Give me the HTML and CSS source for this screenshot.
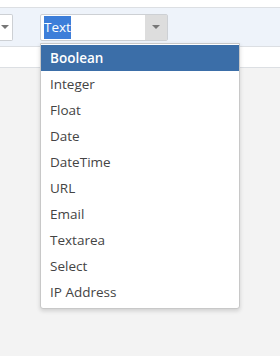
FILE: index.html
```html
<!DOCTYPE html>
<html lang="en">
<head>
  <meta charset="UTF-8" />
  <title>Field type</title>
  <link rel="stylesheet" href="styles.css">
</head>
<body>
  <div class="top"></div>
  <div class="toolbar">
    <div class="select select-left"><span class="arrow"></span></div>
    <div class="select select-type">
      <span class="value"><span class="sel">Text</span></span>
      <span class="btn"><span class="arrow"></span></span>
    </div>
  </div>
  <div class="row"></div>
  <div class="rest"></div>

  <ul class="dropdown">
    <li class="active">Boolean</li>
    <li>Integer</li>
    <li>Float</li>
    <li>Date</li>
    <li>DateTime</li>
    <li>URL</li>
    <li>Email</li>
    <li>Textarea</li>
    <li>Select</li>
    <li>IP Address</li>
  </ul>
</body>
</html>
```

FILE: styles.css
```css
body {
  margin: 0;
  font-family: "Open Sans", "Noto Sans", sans-serif;
  font-size: 13.5px;
  color: #444;
  background: #f3f3f3;
  height: 356px;
  overflow: hidden;
}
.top {
  height: 7px;
  background: #fff;
  border-bottom: 1px solid #dcdfe3;
}
.toolbar {
  height: 38px;
  background: #eef3fa;
  border-bottom: 1px solid #dcdfe3;
  display: flex;
  align-items: center;
  gap: 27px;
}
.select {
  height: 25px;
  background: #fff;
  border: 1px solid #cdd0d4;
  border-radius: 2px;
  display: flex;
  align-items: center;
}
.select-left {
  width: 12px;
  border-left: none;
  border-radius: 0 2px 2px 0;
}
.select-left .arrow {
  margin-left: 1px;
}
.select-type {
  width: 126px;
}
.value {
  flex: 1;
  padding-left: 3px;
}
.sel {
  background: #3d7ed9;
  color: #fff;
  padding: 2px 0 3px;
}
.btn {
  width: 22px;
  height: 100%;
  background: #dddddd;
  display: flex;
  align-items: center;
  justify-content: center;
}
.arrow {
  width: 0;
  height: 0;
  border-left: 4px solid transparent;
  border-right: 4px solid transparent;
  border-top: 4px solid #777;
}
.row {
  height: 20px;
  background: #fff;
  border-bottom: 1px solid #dcdfe3;
}
.dropdown {
  position: absolute;
  left: 40px;
  top: 43px;
  width: 198px;
  margin: 0;
  padding: 1px 0 3px;
  list-style: none;
  background: #fff;
  border: 1px solid #c8c8c8;
  border-radius: 0 0 3px 3px;
  box-shadow: 0 2px 4px rgba(0,0,0,0.15);
}
.dropdown li {
  height: 26px;
  line-height: 26px;
  padding-left: 9px;
}
.dropdown li.active {
  background: #3b6ea8;
  color: #fff;
  font-weight: 600;
}
```
